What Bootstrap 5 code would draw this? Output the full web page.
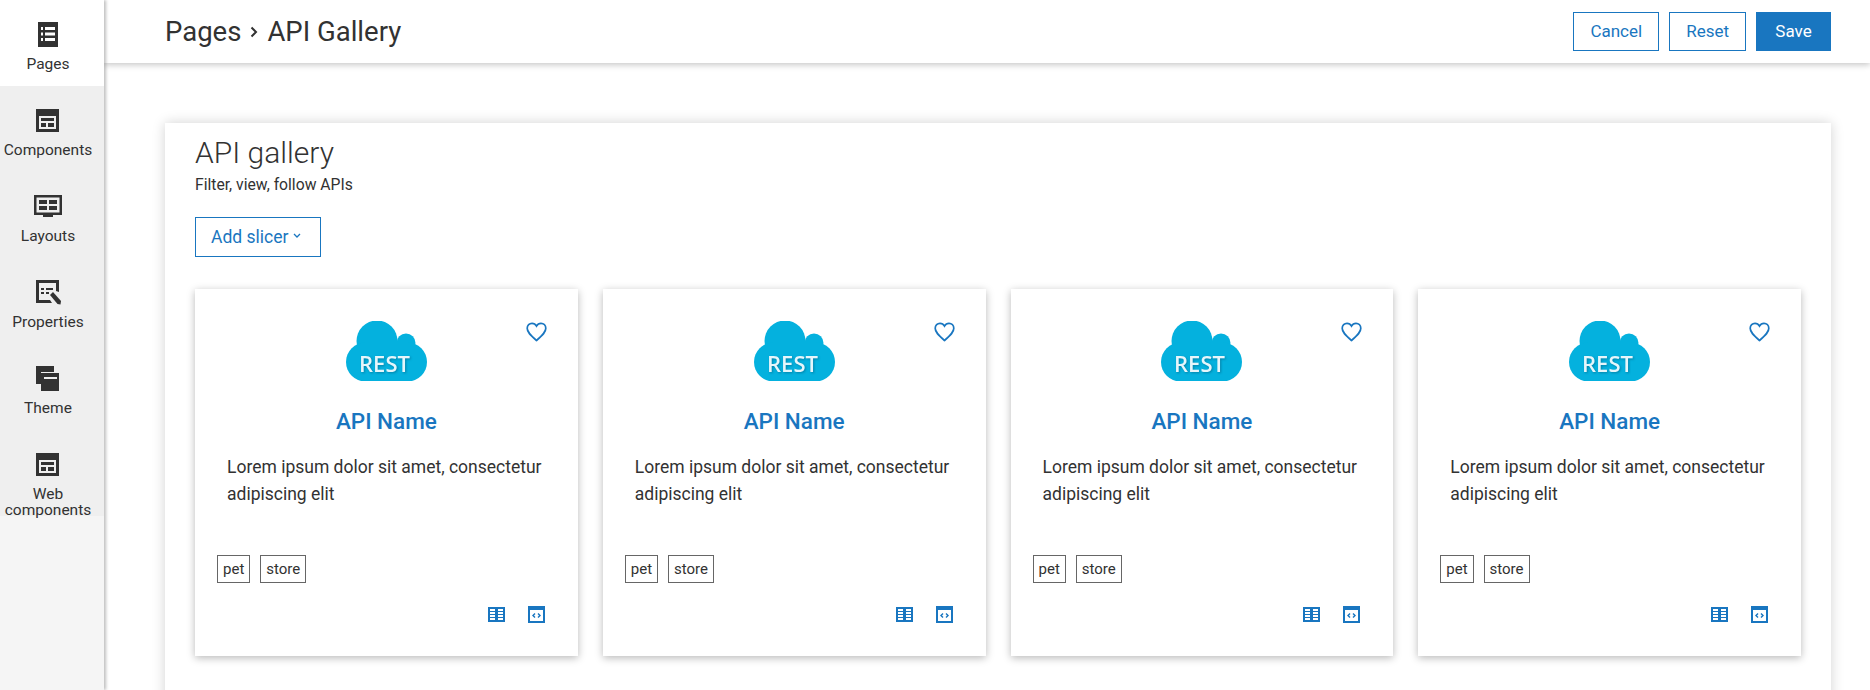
<!DOCTYPE html>
<html>
<head>
    <title>API Gallery</title>
    <link href="https://cdn.jsdelivr.net/npm/bootstrap@5.3.3/dist/css/bootstrap.min.css" rel="stylesheet">
    <style>
        html, body { height: 100%; }
        body { font-family: Roboto, "Liberation Sans", sans-serif; color: #323232; overflow: hidden; background: #fff; }
        .side-rail { width: 104px; flex: none; background: #f5f5f5; box-shadow: 2px 0 3px rgba(0,0,0,.25); z-index: 3; }
        .rail-item { height: 86px; padding: 22px 8px 0 0; background: #efefef; font-size: 15.5px; line-height: 16px; text-align: center; }
        .rail-item.is-active { background: #fff; }
        .rail-item svg { display: block; margin: 0 auto 8px; width: 28px; height: 26px; fill: #323232; }
        .rail-narrow { margin: 0 -4px; }
        .top-strip { height: 63px; flex: none; padding: 0 39px 0 61px; box-shadow: 0 2px 6px rgba(0,0,0,.22); z-index: 2; background: #fff; }
        .crumbs { font-size: 27.5px; line-height: 32px; }
        .crumbs svg { width: 10px; height: 14px; margin: 0 8px 0 8px; }
        .btn-blue, .btn-blue-line { font-size: 17px; line-height: 23px; padding: 7px 16px; border-radius: 0; border: 1px solid #1976c0; }
        .btn-blue { background: #1976c0; color: #fff; min-width: 75px; }
        .btn-blue:hover { background: #1565a6; color: #fff; border-color: #1565a6; }
        .btn-blue-line { background: #fff; color: #1976c0; }
        .btn-blue-line:hover { background: #e8f1f8; color: #1976c0; border-color: #1976c0; }
        .bar-btns { gap: 10px; }
        .work-area { padding: 60px 39px 0 61px; flex: 1; min-height: 0; overflow: hidden; }
        .gallery-panel { padding: 12px 30px 60px; background: #fff; box-shadow: 0 0 12px rgba(0,0,0,.18); }
        .gallery-title { font-size: 30px; font-weight: 300; line-height: 36px; margin: 0; }
        .gallery-sub { font-size: 15.7px; line-height: 18px; margin: 5px 0 23px; }
        .slicer-btn { font-size: 17.5px; padding: 8px 19px 8px 15px; line-height: 22px; }
        .slicer-btn svg { width: 8px; height: 6px; margin: 0 0 4px 5px; }
        .api-grid { grid-template-columns: repeat(4, 1fr); gap: 25px; margin-top: 32px; }
        .api-card { height: 367px; border: 0; border-radius: 0; box-shadow: 0 2px 8px rgba(0,0,0,.28); position: relative; padding-top: 32px; }
        .api-fav { position: absolute; top: 33px; right: 31px; width: 21px; height: 20px; }
        .api-logo { display: block; width: 81px; height: 60px; margin: 0 auto 27px; }
        .rest-word { filter: drop-shadow(1px 1px 1px rgba(0,60,90,.4)); }
        .api-name { font-size: 22.5px; font-weight: 500; line-height: 26px; color: #1976c0; text-align: center; margin: 0 0 20px; }
        .api-desc { font-size: 17.5px; line-height: 27px; margin: 0 32px; height: 101px; }
        .api-tags { padding: 0 22px; gap: 10px; }
        .api-tag { font-size: 15px; line-height: 18px; padding: 4px 5px; border: 1px solid #666; }
        .api-actions { gap: 23px; padding: 0 33px 0 0; margin-top: 23px; }
        .api-actions svg { width: 17px; height: 17px; fill: #1976c0; }
    </style>
</head>
<body>
    <svg width="0" height="0" class="position-absolute">
        <defs>
            <symbol id="i-pages" viewBox="0 0 28 26"><path fill-rule="evenodd" d="M4 0h20v25H4zM7 5v3h2V5zm4 0v3h10V5zM7 10.500v3h2v-3zm4 0v3h10v-3zM7 16v3h2v-3zm4 0v3h10v-3z"/></symbol>
            <symbol id="i-comp" viewBox="0 0 28 26"><path fill-rule="evenodd" d="M2 1h23v23H2zM5 8v13h17V8zm2 2h13v3H7zm0 5h5v4H7zm7 0h6v4h-6z"/></symbol>
            <symbol id="i-layout" viewBox="0 0 28 26"><path fill-rule="evenodd" d="M0 1h28v20H0zM2.500 3.500v15h23v-15zM5 6h8v4H5zm10 0h8v4h-8zM5 12h8v4H5zm10 0h8v4h-8zM9 21h10v2H9z"/></symbol>
            <symbol id="i-props" viewBox="0 0 28 26"><path fill-rule="evenodd" d="M2 0h23v12l-3-1V3H5v17h11l2 3H2zM7 8h3v2H7zm5 0h7v2h-7zM7 12h3v2H7zm5 0h3v2h-3z"/><path d="M16 15l3-3 8 9-.5 3.500-3-.5z"/></symbol>
            <symbol id="i-theme" viewBox="0 0 28 26"><path fill-rule="evenodd" d="M2 0h18v6H7v12H2zm5 7h18v18H7zm3 4v2h13v-2z"/></symbol>
            <symbol id="i-table" viewBox="0 0 17 15"><path fill-rule="evenodd" d="M0 0h17v15H0zM2 2v2h5V2zm0 3v2h5V5zm0 3v2h5V8zm0 3v2h5v-2zm8-9v2h5V2zm0 3v2h5V5zm0 3v2h5V8zm0 3v2h5v-2z"/></symbol>
            <symbol id="i-code" viewBox="0 0 17 17"><path fill-rule="evenodd" d="M0 0h17v17H0zM2 4v11h13V4zm4.500 3L7.500 8l-1.500 1.500L7.500 11l-1 1L4 9.500zm4 0L13 9.500 10.500 12l-1-1L11 9.500 9.500 8z"/></symbol>
        </defs>
    </svg>

    <div class="d-flex h-100">
        <nav class="side-rail">
            <div class="rail-item is-active"><svg><use href="#i-pages"/></svg>Pages</div>
            <div class="rail-item"><svg><use href="#i-comp"/></svg><div class="rail-narrow">Components</div></div>
            <div class="rail-item"><svg><use href="#i-layout"/></svg>Layouts</div>
            <div class="rail-item"><svg><use href="#i-props"/></svg>Properties</div>
            <div class="rail-item"><svg><use href="#i-theme"/></svg>Theme</div>
            <div class="rail-item"><svg><use href="#i-comp"/></svg>Web<br>components</div>
        </nav>

        <div class="d-flex flex-column flex-grow-1" style="min-width:0">
            <header class="top-strip d-flex align-items-center justify-content-between">
                <div class="crumbs d-flex align-items-center">
                    <span>Pages</span>
                    <svg viewBox="0 0 10 14"><path d="M2.500 2.500l4.500 4.500-4.500 4.500" fill="none" stroke="#323232" stroke-width="2"/></svg>
                    <span>API Gallery</span>
                </div>
                <div class="d-flex bar-btns">
                    <button class="btn btn-blue-line" type="button">Cancel</button>
                    <button class="btn btn-blue-line" type="button">Reset</button>
                    <button class="btn btn-blue" type="button">Save</button>
                </div>
            </header>

            <main class="work-area">
                <section class="gallery-panel">
                    <h1 class="gallery-title">API gallery</h1>
                    <p class="gallery-sub">Filter, view, follow APIs</p>
                    <button class="btn btn-blue-line slicer-btn" type="button">Add slicer<svg viewBox="0 0 8 6"><path d="M1 1l3 3 3-3" fill="none" stroke="#1976c0" stroke-width="1.300"/></svg></button>

                    <div class="api-grid d-grid" id="api-grid"></div>
                </section>
            </main>
        </div>
    </div>

    <script>
        // Four identical placeholder cards
        var cardHtml = `
            <div class="card api-card">
                <svg class="api-fav" viewBox="0 0 21 20"><path d="M10.500 18.500C4 13 1.200 10.200 1.200 6.300 1.200 3.400 3.400 1.300 6 1.300c1.900 0 3.500 1 4.500 2.800 1-1.800 2.600-2.800 4.500-2.800 2.600 0 4.800 2.100 4.800 5 0 3.900-2.800 6.700-9.300 12.200z" fill="none" stroke="#1976c0" stroke-width="1.700"/></svg>
                <svg class="api-logo" viewBox="0 0 81 60">
                    <g fill="#04b1de">
                        <circle cx="31" cy="20" r="20.500"/>
                        <circle cx="60" cy="22" r="9.500"/>
                        <circle cx="61.500" cy="41" r="19.500"/>
                        <circle cx="19.500" cy="41" r="19.500"/>
                        <rect x="19" y="20" width="43" height="40"/>
                    </g>
                    <text class="rest-word" x="38.500" y="50.500" text-anchor="middle" font-family="'Open Sans', sans-serif" font-size="22" font-weight="600" fill="#e6f6fb">REST</text>
                </svg>
                <div class="api-name">API Name</div>
                <p class="api-desc">Lorem ipsum dolor sit amet, consectetur adipiscing elit</p>
                <div class="api-tags d-flex">
                    <span class="api-tag">pet</span>
                    <span class="api-tag">store</span>
                </div>
                <div class="api-actions d-flex justify-content-end">
                    <svg><use href="#i-table"/></svg>
                    <svg><use href="#i-code"/></svg>
                </div>
            </div>`;
        document.getElementById('api-grid').innerHTML = cardHtml.repeat(4);
    </script>
    <script src="https://cdn.jsdelivr.net/npm/bootstrap@5.3.3/dist/js/bootstrap.bundle.min.js"></script>
</body>
</html>
